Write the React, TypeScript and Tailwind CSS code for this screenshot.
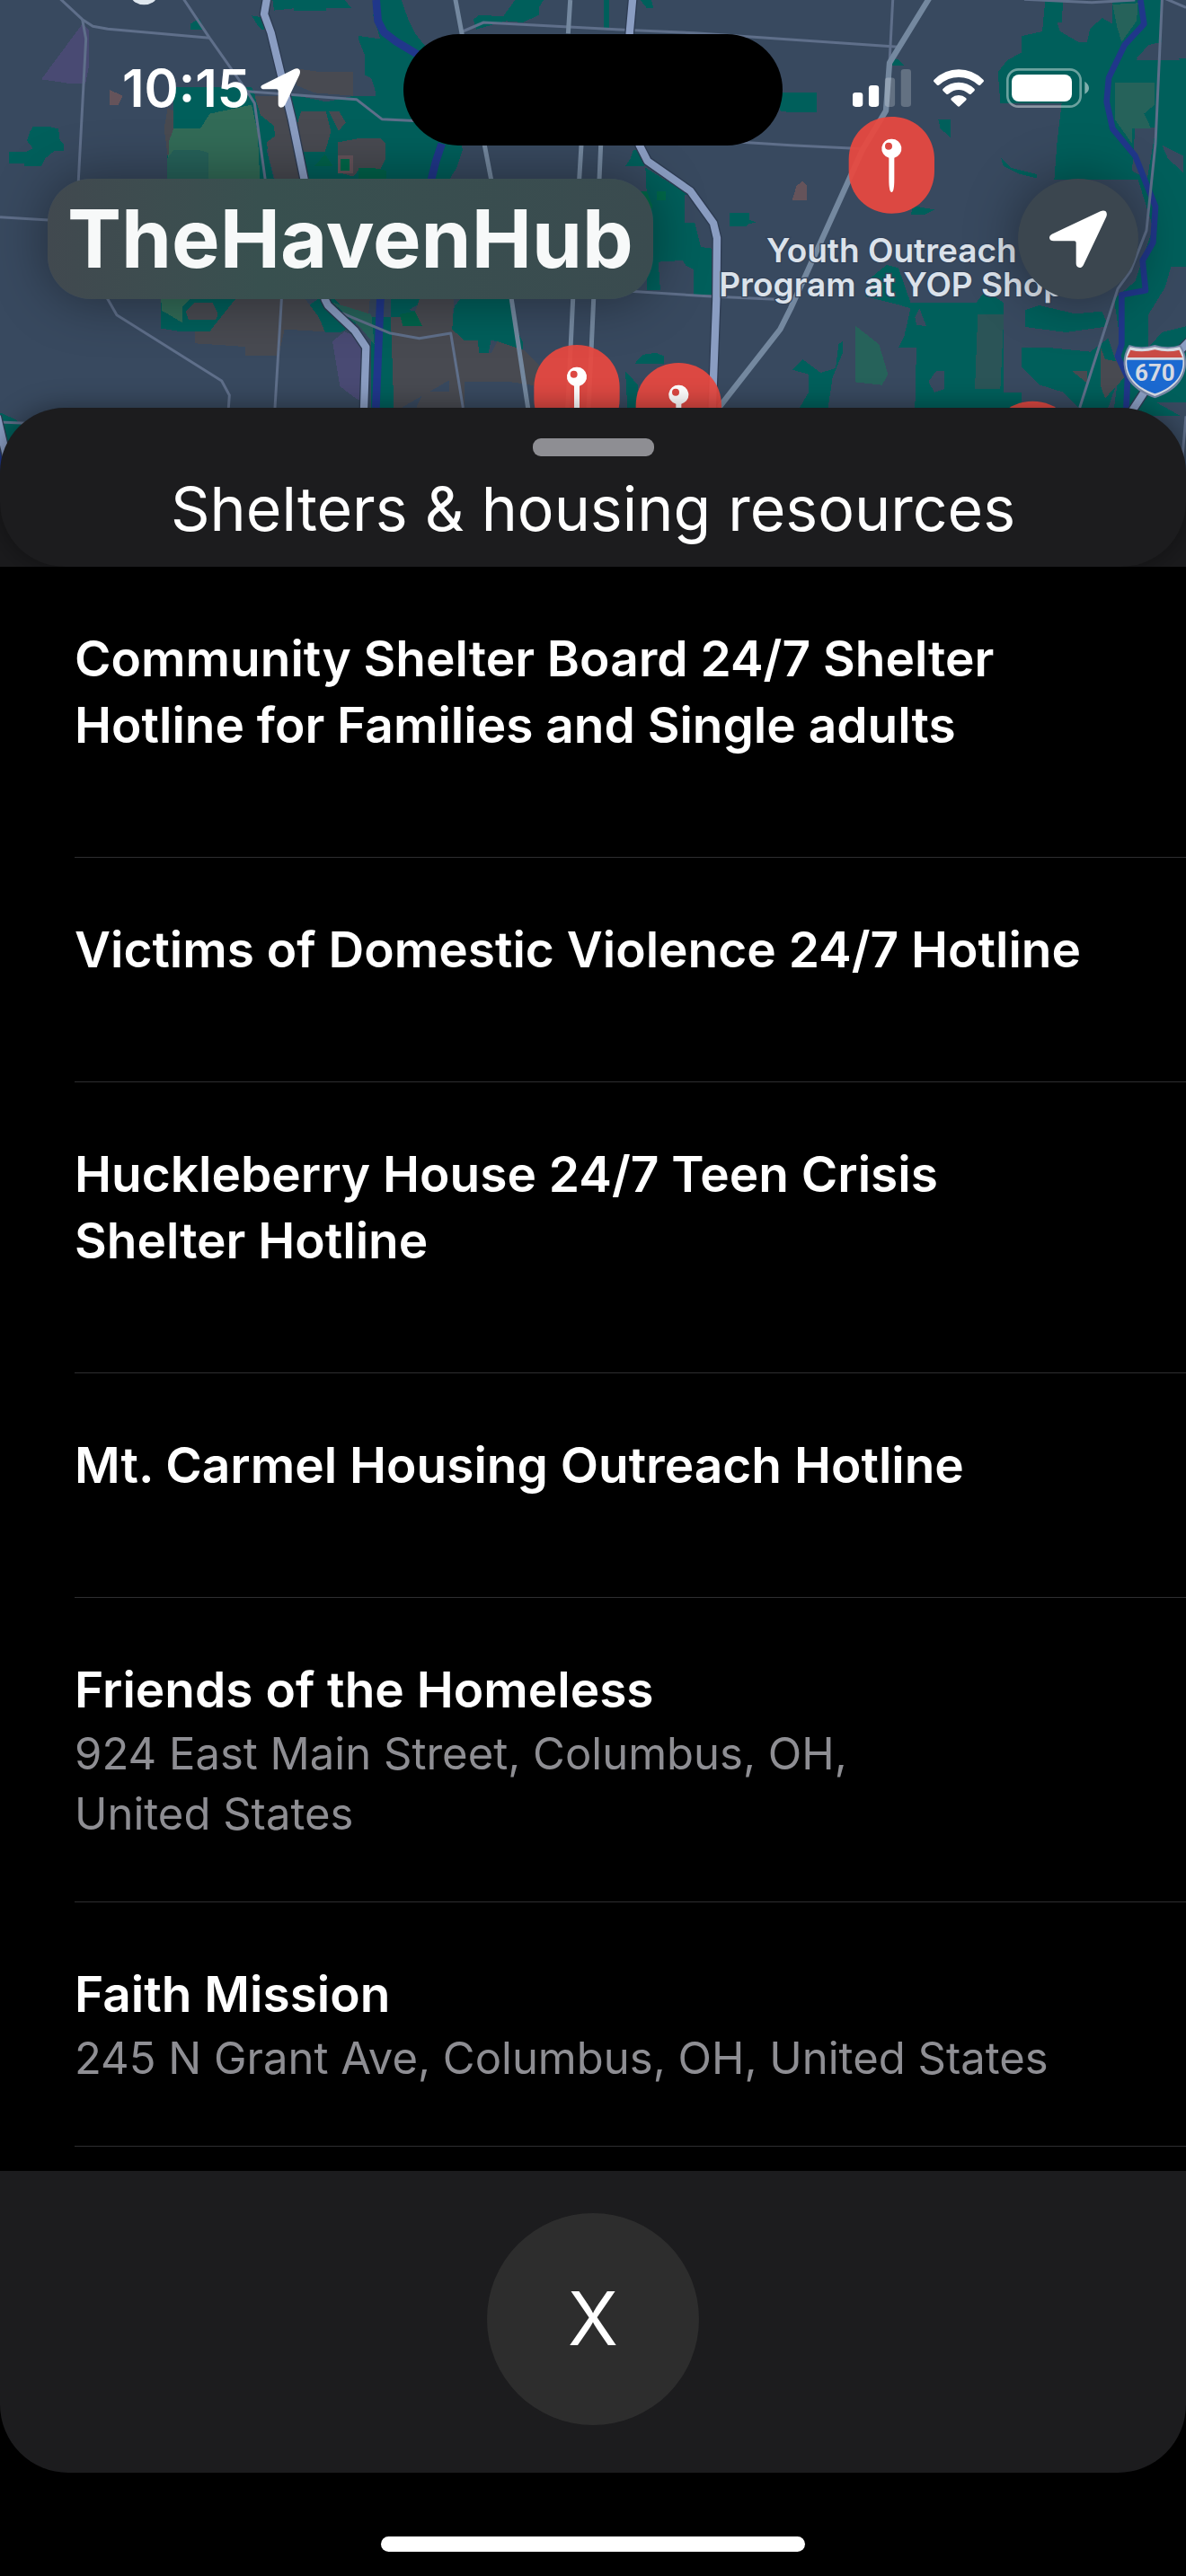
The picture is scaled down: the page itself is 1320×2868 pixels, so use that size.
import React from "react";

type Resource = { name: string; address?: string };

const resources: Resource[] = [
  { name: "Community Shelter Board 24/7 Shelter Hotline for Families and Single adults" },
  { name: "Victims of Domestic Violence 24/7 Hotline" },
  { name: "Huckleberry House 24/7 Teen Crisis Shelter Hotline" },
  { name: "Mt. Carmel Housing Outreach Hotline" },
  { name: "Friends of the Homeless", address: "924 East Main Street, Columbus, OH, United\u00a0States" },
  { name: "Faith Mission", address: "245 N Grant Ave, Columbus, OH, United\u00a0States" },
];

function MapPin({ x, y }: { x: number; y: number }) {
  return (
    <g transform={`translate(${x} ${y})`}>
      <path
        d="M0 0C82 0 143 62 143 142V180C143 262 82 323 0 323S-143 262-143 180V142C-143 62-82 0 0 0Z"
        fill="#e8483f"
        fillOpacity="0.93"
      />
      <path
        fillRule="evenodd"
        d="M0 74a32 32 0 0 1 9 63v70q0 45-9 45t-9-45v-70a32 32 0 0 1 9-63ZM-10 86a12 12 0 1 0 0 24a12 12 0 0 0 0-24Z"
        fill="#fff"
      />
    </g>
  );
}

function CityMap() {
  return (
    <svg
      viewBox="0 0 3960 1650"
      preserveAspectRatio="xMidYMin slice"
      className="absolute inset-x-0 top-0 -z-10 h-[550px] w-full"
      role="img"
      aria-label="Map of Columbus"
    >
      <rect width="3960" height="1650" fill="#38495f" />

      {/* parks */}
      <g fill="#005f5b" shapeRendering="crispEdges">
        <path d="M910 0H1150L1175 27H1090V37H980V28L915 35Z" />
        <path d="M635 80L665 62L685 100H637Z" />
        <path d="M840 52L885 60L880 102L862 88Z" />
        <path d="M110 422H160L195 430L200 470L212 480V505H180L150 530L138 555H80V545H30V508H85L110 495L90 470L100 440Z" />
        <path d="M1270 0H1340L1365 70L1385 110L1440 180L1480 260L1520 420L1545 500L1525 560L1500 600H1015L1005 510L970 315L1090 340L1180 320H1255V310L1240 262L1218 250V185L1198 135V120L1270 130L1245 50Z" />
        <path d="M580 290H840L860 340L950 400L935 455L890 500L915 600H558V520L580 490Z" />
        <path d="M538 1000H790L730 1075L700 1107H600L538 1097Z" />
        <path d="M818 1037H888V1065L930 1095H888V1087H828Z" />
        <path d="M1060 1000H1170L1240 1060H1305V1000H1425L1340 1050V1362H1240V1100L1200 1075L1140 1109H1085L1015 1030Z" />
        <path d="M1580 65L1600 50L1680 55L1720 0H1815L1800 25V50L1745 75L1690 70L1590 98Z" />
        <path d="M2015 0H2035V92H2015Z" />
        <path d="M2138 0H2175L2182 28H2160Z" />
        <path d="M2115 500H2150V555H2088L2105 530Z" />
        <path d="M2155 560L2300 650H2285V745H2320L2340 825L2375 830V985H2315V930L2280 870L2198 875L2205 970H2160L2150 700L2160 660Z" />
        <path d="M2436 710H2502V735L2524 742L2500 748L2490 757H2436Z" />
        <path d="M2118 1216L2145 1185L2190 1178L2218 1190V1216Z" />
        <path d="M2088 1240L2130 1285L2125 1362H2095Z" />
        <path d="M1538 1000H1700L1720 1090L1745 1140V1168L1640 1135L1630 1185H1595V1137H1540L1505 1100L1518 1020Z" />
        <path d="M1320 1030L1400 1040L1425 1120H1350L1325 1080Z" />
        <path d="M1366 1230H1396V1278H1357V1260Z" />
        <path d="M2605 310H2726V376H2640L2605 370Z" />
        <path d="M3133 400H3173V458L3140 430Z" />
        <path d="M3343 528L3375 560L3463 582V596L3400 580L3350 555Z" />
        <path d="M3045 687L3120 700L3090 716H3043Z" />
        <path d="M3490 0H3550L3545 75H3530L3540 105L3600 140H3630L3640 95L3680 60L3715 80V0H3880V140L3835 150L3795 195H3960V1390H3850L3720 1362L3745 1170L3720 1000L3790 940L3850 760L3800 600H3520L3530 470L3545 345H3340L3332 240L3365 200L3412 175V120L3480 105Z" />
        <path d="M2970 190L3000 200L3022 220H2980Z" />
        <path d="M2890 990L2905 930L2960 885L3000 895L3040 1010H3260L3290 970L3350 1010V1310H3410V1362H3055L3060 1160H3000L3020 1120L3040 1030L2990 1015Z" />
        <path d="M3423 1035L3470 1020L3590 1048L3680 1040L3700 1090L3560 1110L3423 1092Z" />
        <path d="M3412 1160H3490L3640 1175L3700 1130L3740 1250L3700 1362H3600L3550 1310L3470 1285L3412 1225Z" />
        <path d="M2645 1235L2680 1200L2740 1245L2790 1230L2800 1150L2813 1140V1180L2780 1260L2765 1362H2670L2700 1310V1250Z" />
        <path d="M0 1378L50 1400L90 1440L20 1480Z" />
      </g>

      {/* open ground inside the parks */}
      <g fill="#38495f" shapeRendering="crispEdges">
        <path d="M3830 165L3880 140L3940 200H3795Z" />
        <path d="M3790 430L3860 425L3830 600L3780 570Z" />
        <path d="M3880 485L3950 520V575L3900 530Z" />
        <path d="M3910 890H3960V1090L3880 1110L3835 1160V1050L3890 960Z" />
        <path d="M3055 1060L3070 1030L3093 1090L3060 1085Z" />
        <path d="M3100 1275L3125 1240L3153 1240V1300L3120 1310Z" />
        <path d="M2210 880L2260 870L2315 900V970L2205 955Z" />
        <path d="M3863 1345H3960V1400Z" />
      </g>

      {/* built-up blocks */}
      <g fill="#484a51" shapeRendering="crispEdges">
        <path d="M985 228L1065 240H1178V320L1050 310L990 285Z" />
        <path d="M850 320L870 385L915 420L918 455L890 475L900 530L918 600H1000L965 400L930 320Z" />
        <path d="M1005 372H1088L1105 440L1085 508H1015L985 440Z" />
        <path d="M1098 372H1132L1155 410L1130 437Z" />
        <path d="M1128 475L1200 462H1270L1288 480V530L1270 565H1200L1180 590L1128 575Z" />
        <path d="M560 360L578 370V490L560 520L548 430Z" />
        <path d="M620 1040L650 1010H710L728 1050L720 1068H630Z" />
        <path d="M785 1000H1020L1065 1060L1085 1108L950 1100L930 1189H818V1158L700 1150L650 1147V1107H700Z" />
        <path d="M1120 1000H1235L1230 1050L1160 1045Z" />
        <path d="M1305 1060H1380L1400 1000H1515L1510 1100L1550 1137H1595L1600 1180H1640L1660 1140L1750 1170L1800 1220V1290L1700 1275H1550V1362H1390L1415 1307H1500V1270L1340 1362H1315Z" />
        <path d="M3580 1240H3630V1280Z" />
        <path d="M3675 1160L3690 1200L3740 1210L3755 1260L3690 1330L3675 1290Z" />
      </g>

      {/* golf courses, cemeteries, campuses */}
      <g shapeRendering="crispEdges">
        <path d="M580 428H670L700 380L840 350L860 440L868 600H558L565 470Z" fill="#326b57" />
        <path d="M580 500H660L697 510V600H558V530Z" fill="#26625a" />
        <path d="M538 1000H635L608 1025V1077L540 1037Z" fill="#326b57" />
        <path d="M1110 1010L1240 1050L1250 1150L1200 1090Z" fill="#26625a" />
        <path d="M3715 15L3800 10L3795 70L3745 140L3730 90Z" fill="#26625a" />
        <path d="M3723 276H3855V350L3820 380L3843 428H3780V480L3723 400Z" fill="#26625a" />
        <path d="M2855 1087L2935 1150L2965 1250L2945 1286L2855 1276Z" fill="#26625a" />
        <path d="M3265 1050H3352L3340 1300H3255Z" fill="#2b5457" />
        <path d="M1198 560H1240L1290 570V600H1198Z" fill="#00634b" />
        <path d="M1050 555L1085 515L1112 555Z" fill="#00634b" />
        <path d="M1335 1050L1385 1040L1410 1090H1345Z" fill="#00634b" />
        <path d="M2125 640L2160 640L2180 690L2165 710Z" fill="#00694a" />
        <path d="M2194 640H2224V668H2194Z" fill="#00694a" />
        <path d="M1128 520H1178V578H1128Z" fill="#65535a" />
        <path d="M1138 530H1168V570H1138Z" fill="#00694a" />
        <path d="M366 300L410 320L395 350H366Z" fill="#65535a" />
        <path d="M2645 668L2660 620L2680 605L2695 620V668Z" fill="#65535a" />
        <path d="M138 265L275 80L298 100V215L285 280H240Z" fill="#494a73" />
        <path d="M1110 1140L1150 1108L1205 1130V1340L1180 1325L1135 1290L1120 1200Z" fill="#494a73" />
      </g>

      {/* rivers */}
      <g fill="none" stroke="#20378a" strokeWidth="26" strokeLinejoin="round">
        <path d="M1256 0L1262 70L1282 108L1320 137L1395 182" />
        <path d="M1475 480L1455 540L1440 600L1270 1000L1265 1120L1255 1362" />
        <path d="M3808 0L3820 80L3755 150L3702 260L3695 340L3715 430L3790 520L3830 620L3858 690L3850 810L3815 870L3825 970L3745 985V1150L3732 1190L3765 1260L3760 1370" strokeWidth="20" />
        <path d="M-5 1460L18 1600" />
      </g>

      {/* local roads */}
      <g fill="none" stroke="#5f6f8a" strokeWidth="9" strokeLinejoin="round">
        <path d="M200 -5L275 65L310 88L360 97L700 127" />
        <path d="M275 65L287 130L262 600L280 800L360 1000L390 1052L740 1272L766 1320L763 1362" />
        <path d="M0 725L200 737" />
        <path d="M612 -5L700 127L825 305L850 345L885 595L940 1000L918 1362" />
        <path d="M825 305L1190 332L1275 398L1400 404" />
        <path d="M1140 1045L1300 1112L1400 1130L1505 1113L1546 1362" />
        <path d="M1545 105L1615 75L2085 100L2320 110L3000 157" />
        <path d="M2475 475L2640 485L2885 497" />
        <path d="M2105 973L2375 990L2640 1002" />
        <path d="M2981 0L2970 210" />
        <path d="M3420 -2L3645 8L3790 0" />
        <path d="M3880 0L3858 480L3828 770L3775 905L3732 965L3605 1362" />
        <path d="M3890 -5L3960 25" />
        <path d="M0 1410L90 1414" />
        <path d="M3960 1390L3945 1560" />
      </g>

      {/* main roads */}
      <g fill="none" stroke="#74889f" strokeWidth="15" strokeLinejoin="round">
        <path d="M1520 -5L1542 112L1618 485L1640 600L1708 1000L1764 1370" />
        <path d="M1904 0L1897 112" />
        <path d="M1941 485L1934 600L1913 1000L1895 1370" />
        <path d="M2006 485L2001 600L1982 1000L1965 1370" />
        <path d="M3102 -5L2970 210L2958 370L2880 500L2640 1030L2605 1100L2400 1362" strokeWidth="19" />
      </g>

      {/* freeways */}
      <g fill="none" strokeLinejoin="round">
        <g stroke="#2d3b52" strokeWidth="33">
          <path d="M892 -10L882 47L905 110L975 400L1015 595L1085 1000L1095 1020L1185 1105L1222 1160L1215 1370" />
          <path d="M2113 -10L2102 112L2135 485L2162 538L2305 638L2382 745L2394 795L2392 1000L2378 1370" />
          <path d="M3980 1130L3850 1265L3775 1380" />
          <path d="M-10 1390L30 1560" />
        </g>
        <g stroke="#8a9dc2" strokeWidth="25">
          <path d="M892 -10L882 47L905 110L975 400L1015 595L1085 1000L1095 1020L1185 1105L1222 1160L1215 1370" />
          <path d="M2113 -10L2102 112L2135 485L2162 538L2305 638L2382 745L2394 795L2392 1000L2378 1370" />
          <path d="M3980 1130L3850 1265L3775 1380" />
          <path d="M-10 1390L30 1560" />
        </g>
      </g>

      <ellipse cx="481" cy="-12" rx="42" ry="28" fill="#dfe7ee" />

      <MapPin x={2977} y={390} />
      <MapPin x={1926} y={1152} />
      <MapPin x={2266} y={1212} />
      <MapPin x={3448} y={1340} />

      <text
        fill="#dbe2ea"
        stroke="#34435a"
        strokeWidth="8"
        paintOrder="stroke"
        fontFamily="Inter, sans-serif"
        fontWeight="600"
        fontSize="111"
        textAnchor="middle"
      >
        <tspan x="2977" y="877">Youth Outreach</tspan>
        <tspan x="2977" y="989">Program at YOP Shop</tspan>
      </text>

      {/* interstate shield */}
      <g transform="translate(3856 1152)">
        <path
          d="M-86 0Q-45 14 0 0Q45 14 86 0Q106 30 104 66C100 122 60 158 0 178C-60 158-100 122-104 66Q-106 30-86 0Z"
          fill="#7686a5"
        />
        <path
          d="M-83 7Q-42 18 0 7Q42 18 83 7Q100 34 98 66C94 116 56 150 0 171C-56 150-94 116-98 66Q-100 34-83 7Z"
          fill="#d5d9e2"
        />
        <path d="M-81 17Q-42 27 0 16Q42 27 81 17L92 42H-92Z" fill="#c94b45" />
        <path d="M-93 50H93C98 106 56 144 0 163C-56 144-98 106-93 50Z" fill="#1b69d0" />
        <text
          y="120"
          fill="#d5d9e2"
          fontFamily="Roboto, sans-serif"
          fontWeight="700"
          fontSize="78"
          textAnchor="middle"
        >
          670
        </text>
      </g>
    </svg>
  );
}

function StatusBar() {
  return (
    <div className="grid grid-cols-[1fr_422px_1fr] items-center pt-[38px] text-white">
      <div className="flex items-center gap-3 pb-1 pl-[136px]">
        <time className="text-[58px] leading-[64px] font-semibold">10:15</time>
        <svg viewBox="0 0 132 132" className="h-11 w-11" fill="currentColor" aria-hidden="true">
          <path d="M10 54L112 3Q124-2 130 5Q134 11 130 22L82 122Q77 131 68 131Q59 130 59 120V76Q59 70 53 70H12Q2 70 1 63Q0 58 10 54Z" />
        </svg>
      </div>
      <div className="h-[124px] rounded-full bg-black" />
      <div className="flex items-center justify-end gap-[25px] pr-[108px] pb-1">
        <svg viewBox="0 0 196 126" className="h-[42px] w-[65px]" fill="currentColor" aria-label="Signal">
          <rect y="78" width="34" height="48" rx="10" />
          <rect x="54" y="54" width="34" height="72" rx="10" />
          <rect x="108" y="28" width="34" height="98" rx="10" opacity="0.22" />
          <rect x="162" width="34" height="126" rx="10" opacity="0.22" />
        </svg>
        <svg viewBox="0 0 168 124" className="h-[42px] w-14" fill="currentColor" aria-label="Wi-Fi">
          <path d="M2 34Q38 0 84 0T166 34Q170 38 166 42L156 52Q152 55 148 51Q120 26 84 26T20 51Q16 55 12 52L2 42Q-2 38 2 34Z" />
          <path d="M32 64Q54 43 84 43T136 64Q140 68 136 72L125 82Q121 85 117 81Q102 68 84 68T51 81Q47 85 43 82L32 72Q28 68 32 64Z" />
          <path d="M60 95Q70 86 84 86T108 95Q112 99 108 103L88 122Q84 126 80 122L60 103Q56 99 60 95Z" />
        </svg>
        <svg viewBox="0 0 276 132" className="h-11 w-[92px]" aria-label="Battery">
          <rect x="4" y="4" width="244" height="124" rx="36" fill="none" stroke="#fff" strokeOpacity="0.42" strokeWidth="8" />
          <rect x="18" y="21" width="201" height="90" rx="24" fill="#fff" />
          <path d="M262 44Q276 54 276 66T262 86Z" fill="#fff" fillOpacity="0.5" />
        </svg>
      </div>
    </div>
  );
}

function ResourceRow({ name, address }: Resource) {
  return (
    <li className={address ? "border-b border-[#2e2e30] pt-[65px] pr-20 pb-16" : "border-b border-[#2e2e30] pt-[65px] pr-20 pb-[110px]"}>
      <h2 className="max-w-[1140px] text-[55px] leading-[74px] font-semibold text-white">{name}</h2>
      {address && <p className="max-w-[1110px] pt-px text-[49px] leading-[67px] text-[#8e8e93]">{address}</p>}
    </li>
  );
}

export default function App() {
  return (
    <div className="flex min-h-screen flex-col bg-black font-['Inter',sans-serif]">
      <div className="relative isolate overflow-hidden bg-[#1b1b1d]">
        <CityMap />
        <StatusBar />
        <div className="flex items-center justify-between px-[53px] pt-[37px]">
          <h1 className="rounded-[48px] bg-linear-to-r from-[#41494f] via-[#38504f] via-35% to-[#3a4b4f] px-[22px] py-[11px] text-[90px] leading-[112px] font-bold text-[#f7f9f9] shadow-[0_0_60px_rgba(0,0,0,0.4)]">
            TheHavenHub
          </h1>
          <button
            type="button"
            aria-label="My location"
            className="flex h-[134px] w-[134px] items-center justify-center rounded-full bg-[#3b464f] text-white shadow-[0_0_60px_rgba(0,0,0,0.4)]"
          >
            <svg viewBox="0 0 192 192" className="h-16 w-16" fill="currentColor" aria-hidden="true">
              <path d="M8 80L170 4Q181-1 188 4Q194 10 190 22L114 182Q109 192 101 192Q89 191 89 178V109Q89 103 83 103H14Q2 103 0 93Q-1 85 8 80Z" />
            </svg>
          </button>
        </div>
        <header className="mt-[121px] flex flex-col items-center rounded-[72px] bg-[#1c1c1e] pt-[34px] pb-[23px] shadow-[0_0_30px_rgba(0,0,0,0.4)]">
          <button type="button" aria-label="Resize sheet" className="h-5 w-[135px] rounded-[9px] bg-[#8e8e93]" />
          <h2 className="mt-4 text-center text-[68px] leading-[84px] font-normal text-white">
            Shelters &amp; housing resources
          </h2>
        </header>
      </div>

      <ul className="flex-1 pb-[27px] pl-[83px]">
        {resources.map((r) => (
          <ResourceRow key={r.name} {...r} />
        ))}
      </ul>

      <footer className="flex justify-center rounded-b-[76px] bg-[#1c1c1e] pt-[47px] pb-[53px]">
        <button
          type="button"
          aria-label="Close"
          className="h-[236px] w-[236px] rounded-full bg-[#2d2d2d] text-[82px] leading-none font-normal text-white"
        >
          X
        </button>
      </footer>
      <div className="flex justify-center pt-[71px] pb-[27px]">
        <div className="h-[17px] w-[472px] rounded-full bg-white" />
      </div>
    </div>
  );
}
